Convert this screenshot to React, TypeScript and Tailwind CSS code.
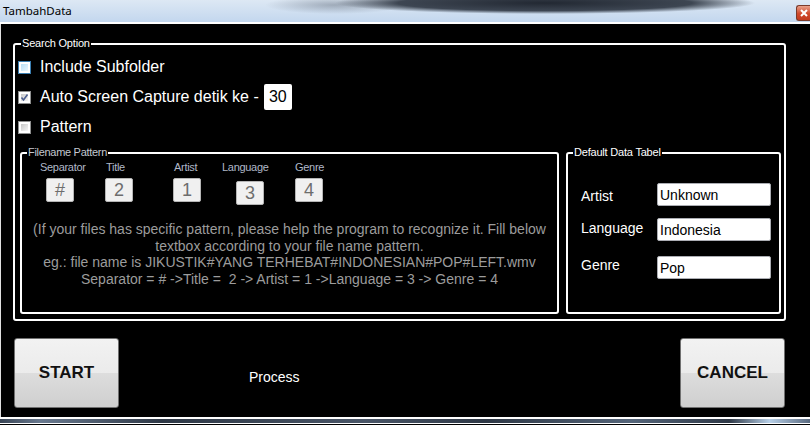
import React from "react";

type CbVariant = "hot" | "checked" | "plain";

function Checkbox({ variant }: { variant: CbVariant }) {
  const outer =
    variant === "hot" ? "border-[#3c7fb1]" : "border-[#8e8f8f]";
  const inner =
    variant === "hot"
      ? "bg-[linear-gradient(135deg,#b9dff5,#eaf7fe)]"
      : "bg-[linear-gradient(135deg,#c8c8c8,#f7f7f7)]";
  return (
    <div className={`w-[13px] h-[13px] border ${outer} bg-white p-[2px] shrink-0`}>
      <div className={`w-full h-full ${inner} flex items-center justify-center`}>
        {variant === "checked" && (
          <svg width="9" height="9" viewBox="0 0 9 9" className="-m-[1px]">
            <path d="M1.5 4.5 L3.5 7 L7.5 1.5" stroke="#4d5f8f" strokeWidth="1.6" fill="none" />
          </svg>
        )}
      </div>
    </div>
  );
}

function PatternBox({ value, extra = "" }: { value: string; extra?: string }) {
  return (
    <div
      className={`w-[28px] h-[24px] bg-[#f0f0f0] border border-[#b5b5b5] rounded-[2px] flex items-center justify-center text-[18px] leading-none text-[#6d6d6d] ${extra}`}
    >
      {value}
    </div>
  );
}

function TextInput({ value }: { value: string }) {
  return (
    <div className="w-[114px] h-[23px] shrink-0 bg-white border border-[#abadb3] rounded-[2px] flex items-center pl-[2px] text-[14px] text-black">
      {value}
    </div>
  );
}

function WinButton({ label }: { label: string }) {
  return (
    <div className="w-[105px] h-[70px] rounded-[3px] border border-[#707070] bg-[linear-gradient(to_bottom,#f2f2f2_0%,#ebebeb_50%,#dddddd_50%,#cfcfcf_100%)] flex items-center justify-center text-[17px] font-bold text-[#111]">
      {label}
    </div>
  );
}

export default function App() {
  return (
    <div className="w-[810px] h-[425px] bg-black flex flex-col overflow-hidden font-['Liberation_Sans',Arial,sans-serif]">
      {/* Title bar */}
      <div className="h-[22px] shrink-0 flex items-center bg-[radial-gradient(ellipse_210px_11px_at_545px_3px,rgba(28,34,44,0.97)_0%,rgba(40,48,60,0.88)_70%,rgba(60,70,85,0)_100%),radial-gradient(ellipse_70px_9px_at_335px_5px,rgba(90,100,115,0.45),rgba(90,100,115,0)),linear-gradient(to_bottom,#dde8f4,#c3d7ee)]">
        <span className="pl-[3px] text-[11.5px] text-black font-['Noto_Sans','Liberation_Sans',sans-serif]">
          TambahData
        </span>
        <div className="ml-auto mt-[3px] w-[14px] h-[16px] rounded-l-[3px] border border-r-0 border-[#7a3a2a] bg-[linear-gradient(to_bottom,#e8a08a,#d0482a_55%,#c23a1e)] flex items-center justify-center">
          <svg width="8" height="8" viewBox="0 0 8 8">
            <path d="M1 1 L7 7 M7 1 L1 7" stroke="white" strokeWidth="2" />
          </svg>
        </div>
      </div>
      <div className="h-[2px] shrink-0 bg-white" />

      {/* Body */}
      <div className="flex-1 flex flex-col border-l border-[#e0e0e0] pl-[12px] pr-[24px]">
        <fieldset className="mt-[13px] h-[284px] border-2 border-white rounded-[3px] pl-[3px] pr-[3px] flex flex-col">
          <legend className="ml-[3px] px-[1px] text-[11px] leading-[13px] tracking-[-0.2px] text-white">
            Search Option
          </legend>
          <div className="mt-[2px] h-[30px] flex items-center gap-[9px] text-[16px] text-white">
            <Checkbox variant="hot" />
            <span>Include Subfolder</span>
          </div>
          <div className="h-[30px] flex items-center gap-[9px] text-[16px] text-white">
            <Checkbox variant="checked" />
            <span>Auto Screen Capture detik ke -</span>
            <div className="-ml-[4px] w-[28px] h-[26px] bg-white rounded-[2px] flex items-center justify-center text-[16px] text-black">
              30
            </div>
          </div>
          <div className="h-[30px] flex items-center gap-[9px] text-[16px] text-white">
            <Checkbox variant="plain" />
            <span>Pattern</span>
          </div>

          <div className="mt-[4px] ml-[2px] flex gap-[7px]">
            {/* Filename Pattern */}
            <fieldset className="w-[539px] h-[168px] border-2 border-white rounded-[3px] flex flex-col">
              <legend className="ml-[5px] px-[1px] text-[11px] leading-[13px] tracking-[-0.3px] text-[#c4c8d0]">
                Filename Pattern
              </legend>
              <div className="mt-[1px] pl-[18px] flex text-[11px] leading-[14px] tracking-[-0.3px] text-[#b0b8c8]">
                <span className="w-[66px]">Separator</span>
                <span className="w-[68px]">Title</span>
                <span className="w-[48px]">Artist</span>
                <span className="w-[73px]">Language</span>
                <span>Genre</span>
              </div>
              <div className="mt-[4px] pl-[24px] flex items-start">
                <div className="w-[59px]">
                  <PatternBox value="#" extra="w-[27px]" />
                </div>
                <div className="w-[68px]">
                  <PatternBox value="2" />
                </div>
                <div className="w-[63px]">
                  <PatternBox value="1" extra="w-[27px]" />
                </div>
                <div className="w-[59px] pt-[3px]">
                  <PatternBox value="3" />
                </div>
                <div>
                  <PatternBox value="4" />
                </div>
              </div>
              <div className="mt-[16px] text-center text-[14px] leading-[16.7px] text-[#9c9c9c]">
                <p>(If your files has specific pattern, please help the program to recognize it. Fill below</p>
                <p>textbox according to your file name pattern.</p>
                <p>eg.: file name is JIKUSTIK#YANG TERHEBAT#INDONESIAN#POP#LEFT.wmv</p>
                <p>Separator = # -&gt;Title =&nbsp; 2 -&gt; Artist = 1 -&gt;Language = 3 -&gt; Genre = 4</p>
              </div>
            </fieldset>

            {/* Default Data Tabel */}
            <fieldset className="w-[215px] h-[168px] border-2 border-white rounded-[3px] flex flex-col pl-[13px]">
              <legend className="ml-[-8px] px-[1px] text-[11px] leading-[13px] tracking-[-0.2px] text-white">
                Default Data Tabel
              </legend>
              <div className="mt-[24px] h-[23px] flex items-center text-[14px] leading-[16px] text-white">
                <span className="w-[76px] pt-[2px]">Artist</span>
                <TextInput value="Unknown" />
              </div>
              <div className="mt-[12px] h-[23px] flex items-center text-[14px] leading-[16px] text-white">
                <span className="w-[76px] pb-[4px]">Language</span>
                <TextInput value="Indonesia" />
              </div>
              <div className="mt-[15px] h-[23px] flex items-center text-[14px] leading-[16px] text-white">
                <span className="w-[76px] pb-[5px]">Genre</span>
                <TextInput value="Pop" />
              </div>
            </fieldset>
          </div>
        </fieldset>

        <div className="mt-[17px] flex items-center">
          <div className="ml-[1px]">
            <WinButton label="START" />
          </div>
          <span className="ml-[130px] pt-[8px] text-[14px] text-white">Process</span>
          <div className="ml-auto mr-[1px]">
            <WinButton label="CANCEL" />
          </div>
        </div>
      </div>

      {/* Bottom frame */}
      <div className="h-[2px] shrink-0 bg-white" />
      <div className="h-[4px] shrink-0 bg-[linear-gradient(to_right,#3a4656,#6a7a90_5%,#2e3846_20%,#4a5668_45%,#2e3846_60%,#55657a_78%,#2e3846_90%,#b8d0e8_95%,#5a6a80)]" />
      <div className="h-[1px] shrink-0 bg-white" />
      <div className="h-[1px] shrink-0 bg-black" />
    </div>
  );
}
